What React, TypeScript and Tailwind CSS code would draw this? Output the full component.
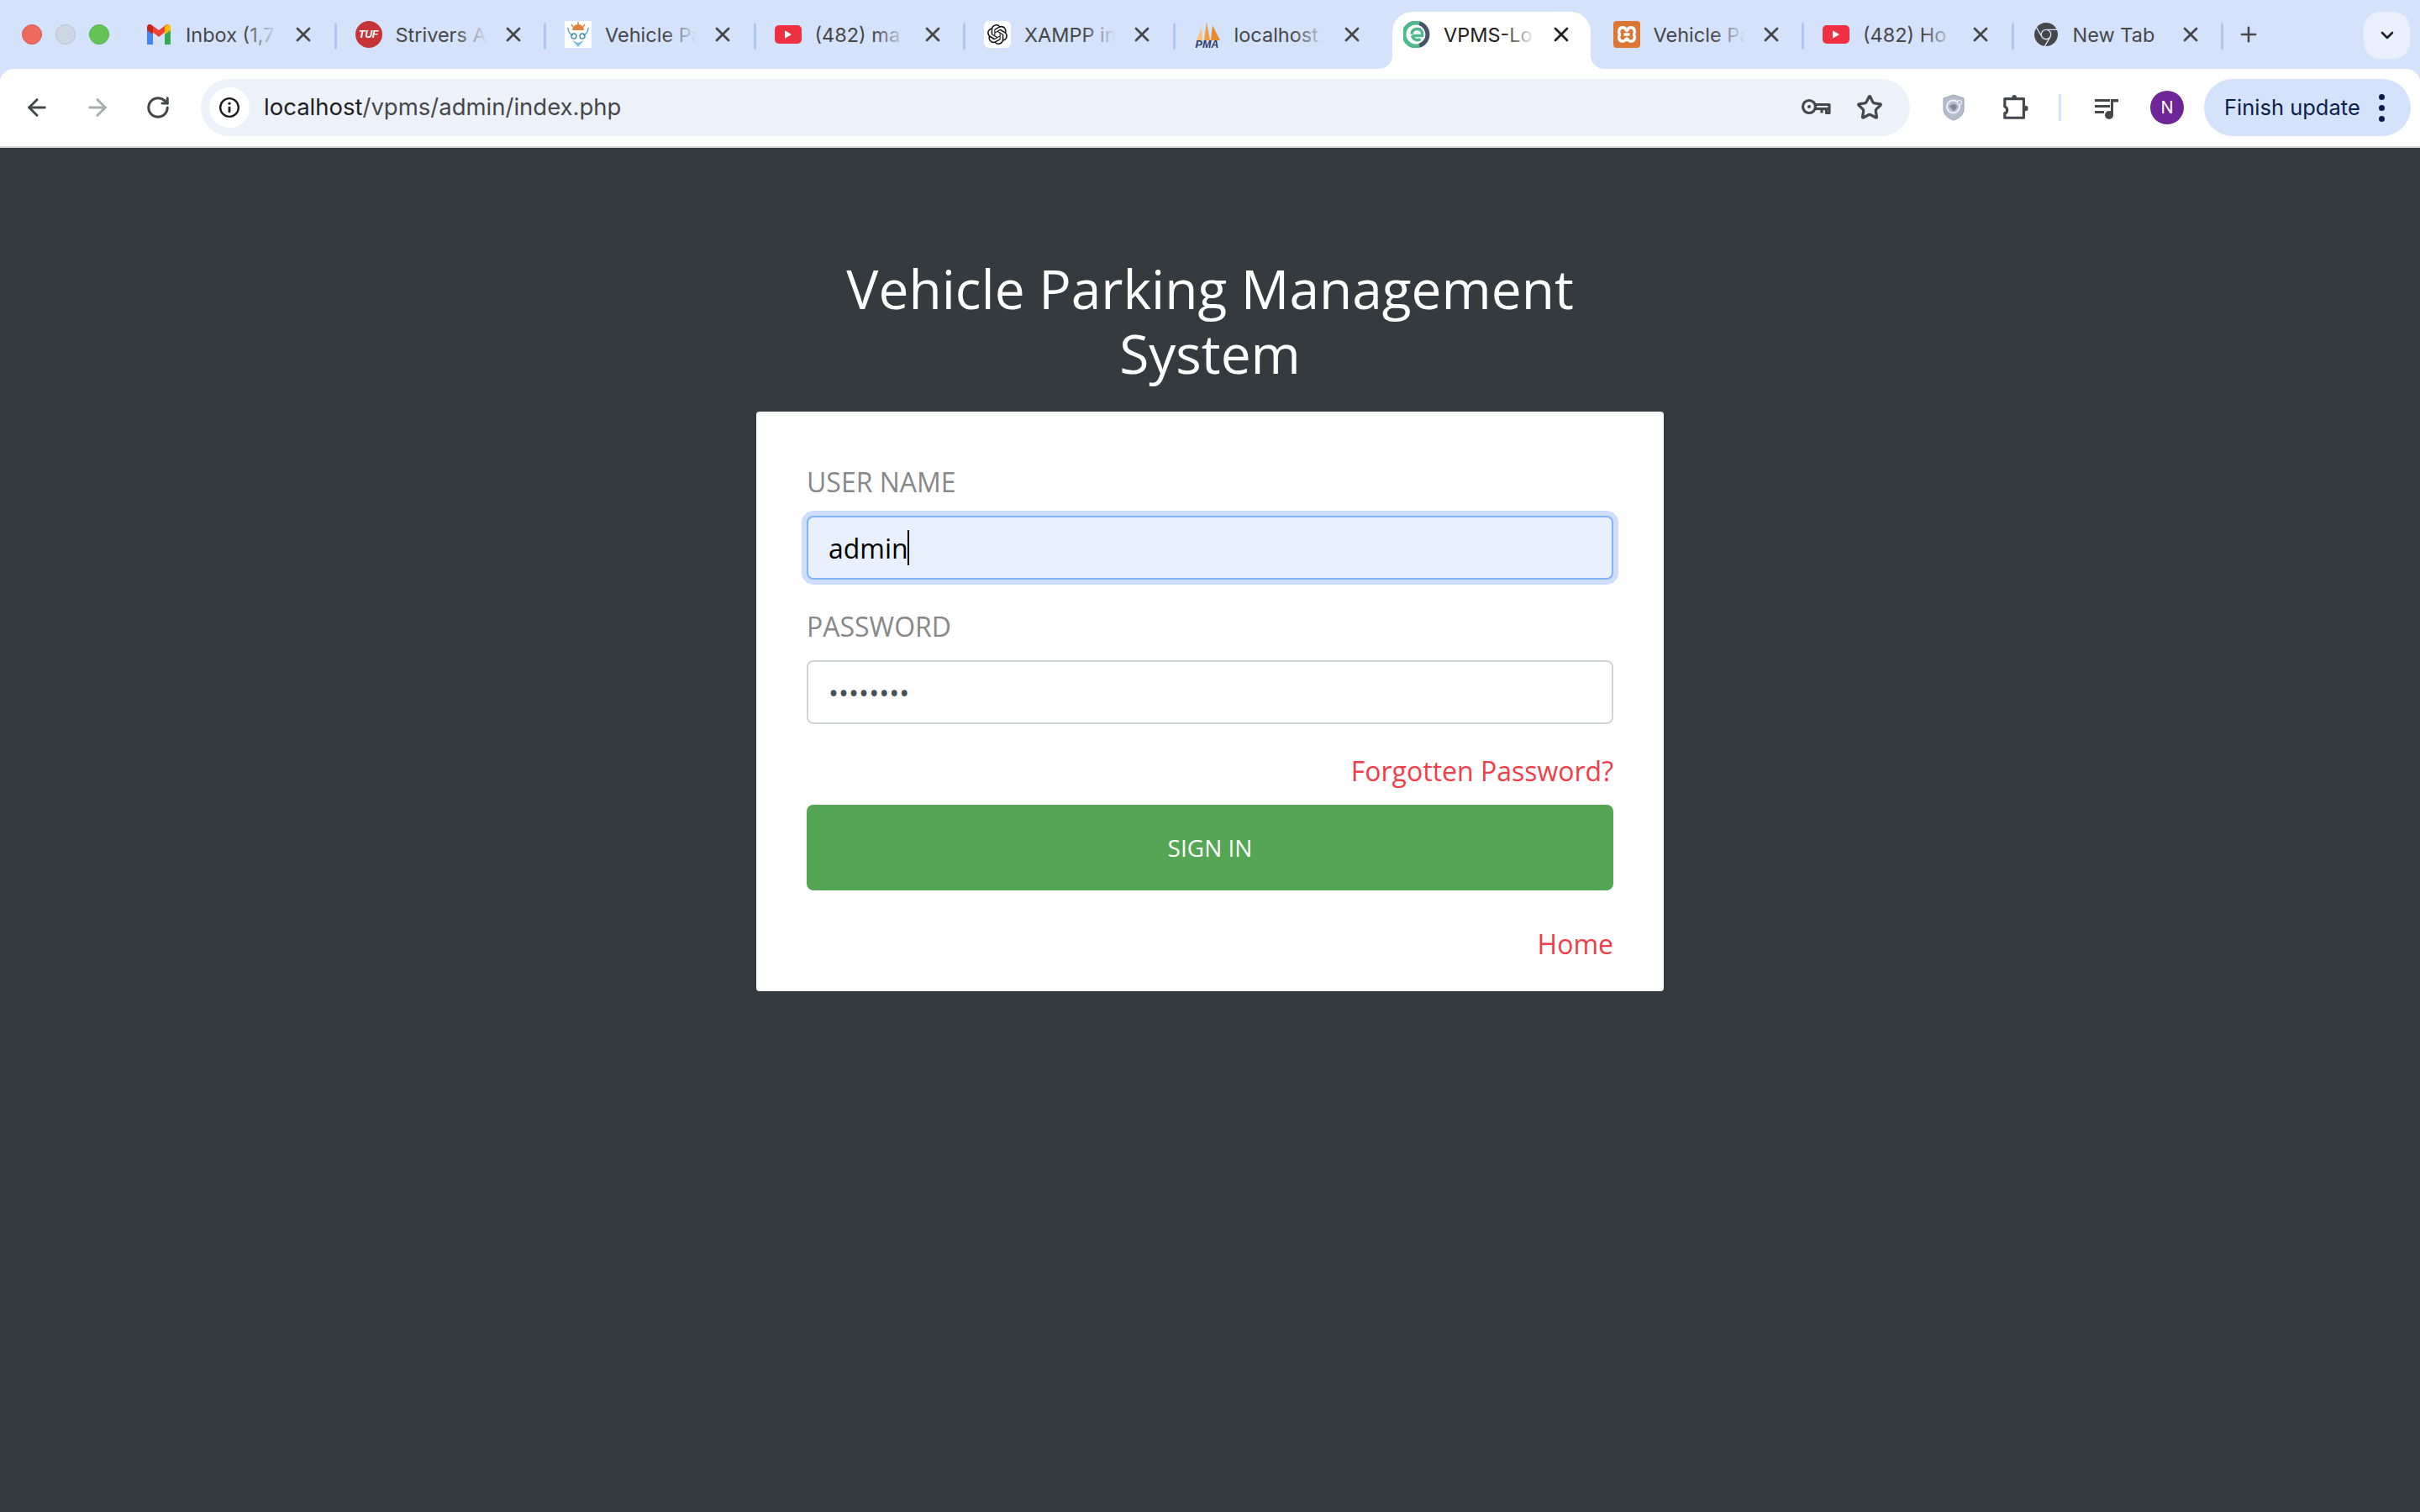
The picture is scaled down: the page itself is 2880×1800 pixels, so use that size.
import type { ReactNode } from 'react';
import { ArrowLeft, ArrowRight, RotateCw, X, Plus, ChevronDown, Star } from 'lucide-react';
import { SiOpenai, SiGooglechrome } from 'react-icons/si';

function GmailIcon() {
  return (
    <svg viewBox="2 4 28 24" className="w-[30px] h-[24px]">
      <path d="M2 28V8l7 5v15z" fill="#4285f4" />
      <path d="M23 28V13l7-5v20z" fill="#34a853" />
      <path d="M2 8c0-4 4-5 6-3l8 6 8-6c2-2 6-1 6 3l-14 11z" fill="#ea4335" />
      <path d="M23 7l2-2c2-2 5-1 5 3v3l-7 5z" fill="#fbbc04" />
      <path d="M2 8c0-4 3-5 5-3l2 2v9L2 11z" fill="#c5221f" />
    </svg>
  );
}

function TufIcon() {
  return (
    <div className="w-8 h-8 rounded-full bg-[#c63438] flex items-center justify-center">
      <span className="text-white text-[12.500px] font-extrabold italic tracking-tight font-['Liberation_Sans',sans-serif]">TUF</span>
    </div>
  );
}

function OwlIcon() {
  return (
    <svg viewBox="0 0 32 32" className="w-8 h-8">
      <rect width="32" height="32" fill="#ffffff" />
      <path d="M9 11a7 7 0 0 1 14 0z" fill="#e2803c" />
      <path d="M16 1v3M8 4l2 3M24 4l-2 3" stroke="#e2803c" strokeWidth="1.5" />
      <path d="M4 8c0 6 3 8 6 9M28 8c0 6-3 8-6 9" stroke="#5fa8c4" strokeWidth="1.5" fill="none" />
      <circle cx="11" cy="18" r="3" fill="none" stroke="#4b8fb0" strokeWidth="1.5" />
      <circle cx="21" cy="18" r="3" fill="none" stroke="#4b8fb0" strokeWidth="1.5" />
      <path d="M9 23l7 8 7-8-7 3z" fill="#7cc0d8" />
    </svg>
  );
}

function YoutubeIcon() {
  return (
    <div className="w-8 h-[22px] rounded-[5px] bg-[#ee3040] flex items-center justify-center">
      <svg viewBox="0 0 10 12" className="w-[8px] h-[10px]">
        <path d="M0 0l10 6-10 6z" fill="#ffffff" />
      </svg>
    </div>
  );
}

function OpenAiIcon() {
  return (
    <div className="w-8 h-8 rounded-[6px] bg-white flex items-center justify-center">
      <SiOpenai className="w-6 h-6 text-[#1a1a1a]" />
    </div>
  );
}

function PmaIcon() {
  return (
    <div className="relative w-8 h-8">
      <svg viewBox="0 0 32 24" className="w-8 h-[24px]">
        <path d="M3 23L9 8l1 15z" fill="#f5c27a" />
        <path d="M12 23l3-22 4 22z" fill="#ee9c3d" />
        <path d="M20 23l2-18 9 18z" fill="#e88a2c" />
      </svg>
      <span className="absolute left-0 bottom-[-2px] w-8 text-center text-[12.500px] leading-none font-bold italic text-[#2f3a6a] font-['Liberation_Sans',sans-serif]">PMA</span>
    </div>
  );
}

function EduIcon() {
  return (
    <svg viewBox="0 0 32 32" className="w-8 h-8">
      <path d="M19 2.600A14 14 0 1 0 19 29.400" fill="none" stroke="#4fb98d" strokeWidth="5" />
      <path d="M19 2.600A14 14 0 0 1 19 29.400" fill="none" stroke="#46546a" strokeWidth="5" />
      <path d="M10 15.500a6.500 6.500 0 0 1 12.500-2v4H10.500M10.500 17.500a6.500 6.500 0 0 0 10 4" fill="none" stroke="#4fb98d" strokeWidth="3.400" />
    </svg>
  );
}

function XamppIcon() {
  return (
    <div className="w-8 h-8 rounded-[4px] bg-[#dc7632] flex items-center justify-center">
      <svg viewBox="0 0 24 24" className="w-[28px] h-[28px]" fill="none" stroke="#ffffff" strokeWidth="3">
        <path d="M8 5c3 0 3 3 4 3s1-3 4-3c5 0 5 7 2 7 3 0 3 7-2 7-3 0-3-3-4-3s-1 3-4 3c-5 0-5-7-2-7-3 0-3-7 2-7z" />
        <path d="M9 12h6" />
      </svg>
    </div>
  );
}

function ChromeIcon() {
  return <SiGooglechrome className="w-7 h-7 text-[#45474a]" />;
}

type TabData = { title: string; icon: ReactNode; active?: boolean; noSep?: boolean; noFade?: boolean };

const tabs: TabData[] = [
  { title: 'Inbox (1,7', icon: <GmailIcon /> },
  { title: 'Strivers A', icon: <TufIcon /> },
  { title: 'Vehicle Pa', icon: <OwlIcon /> },
  { title: '(482) ma', icon: <YoutubeIcon /> },
  { title: 'XAMPP in', icon: <OpenAiIcon /> },
  { title: 'localhost', icon: <PmaIcon />, noSep: true },
  { title: 'VPMS-Lo', icon: <EduIcon />, active: true, noSep: true },
  { title: 'Vehicle Pa', icon: <XamppIcon /> },
  { title: '(482) Ho', icon: <YoutubeIcon /> },
  { title: 'New Tab', icon: <ChromeIcon />, noFade: true },
];

function Tab({ tab }: { tab: TabData }) {
  return (
    <div className="relative w-[249.5px] h-full shrink-0 flex items-center pl-[24px]">
      {tab.active && (
        <>
          <div className="absolute left-[11px] right-[3px] top-[14px] bottom-0 bg-white rounded-t-[24px]" />
          <svg viewBox="0 0 16 16" className="absolute left-[-5px] bottom-0 w-4 h-4">
            <path d="M16 0v16H0a16 16 0 0 0 16-16z" fill="#ffffff" />
          </svg>
          <svg viewBox="0 0 16 16" className="absolute right-[-13px] bottom-0 w-4 h-4">
            <path d="M0 0v16h16A16 16 0 0 1 0 0z" fill="#ffffff" />
          </svg>
        </>
      )}
      <div className="relative w-8 h-8 shrink-0 flex items-center justify-center">{tab.icon}</div>
      <div className={`relative ml-[16px] w-[116px] pt-[1px] overflow-hidden whitespace-nowrap text-[23.500px] leading-8 ${tab.active ? 'text-[#1f2023]' : 'text-[#45474a]'}`}>
        {tab.title}
        {!tab.noFade && (
          <div className={`absolute right-0 top-0 h-full w-[46px] bg-gradient-to-r from-transparent to-85% ${tab.active ? 'to-white' : 'to-[#d5e2fb]'}`} />
        )}
      </div>
      <X className={`relative ml-[10px] w-[28px] h-[28px] shrink-0 ${tab.active ? 'text-[#1f2023]' : 'text-[#45474a]'}`} strokeWidth={2.4} />
      {!tab.noSep && <div className="absolute right-[-2px] top-[27px] w-[3px] h-[32px] rounded-full bg-[#aec6f4]" />}
    </div>
  );
}

function TabStrip() {
  return (
    <div className="h-[82px] bg-[#d5e2fb] flex items-stretch shrink-0">
      {/* Window controls */}
      <div className="w-[149px] shrink-0 flex items-center gap-[16px] pl-[26px]">
        <div className="w-6 h-6 rounded-full bg-[#ee6a5f] border border-[#d9584e]" />
        <div className="w-6 h-6 rounded-full bg-[#ced5e3] border border-[#b9c0cf]" />
        <div className="w-6 h-6 rounded-full bg-[#62c554] border border-[#52ae46]" />
      </div>
      {tabs.map((tab, i) => (
        <Tab key={i} tab={tab} />
      ))}
      <div className="ml-[18px] flex items-center">
        <Plus className="w-[28px] h-[28px] text-[#45474a]" strokeWidth={2.2} />
      </div>
      <div className="ml-auto mr-[12px] mt-[14px] w-[55px] h-[56px] rounded-[20px] bg-[#e9effb] flex items-center justify-center">
        <ChevronDown className="w-[24px] h-[24px] text-[#1f2023]" strokeWidth={2.6} />
      </div>
    </div>
  );
}

function KeyIcon() {
  return (
    <svg viewBox="0 0 36 24" className="w-[36px] h-[24px]" fill="none" stroke="#45474a" strokeWidth="3.200">
      <circle cx="10" cy="11" r="7.500" />
      <circle cx="10" cy="11" r="2" fill="#45474a" stroke="none" />
      <path d="M17.500 8.500H34v10h-3.500v-4M25 14.500v4" strokeLinejoin="round" />
      <path d="M17.500 13.500H34" />
    </svg>
  );
}

function ShieldIcon() {
  return (
    <svg viewBox="0 0 26 32" className="w-[26px] h-[32px]">
      <path d="M13 1l12 4v13c0 7-6 11-12 13C7 29 1 25 1 18V5z" fill="#b4bccb" stroke="#9aa3b5" strokeWidth="1" />
      <circle cx="12.500" cy="15" r="7.500" fill="none" stroke="#eef0f4" strokeWidth="2" />
      <path d="M8 15c2-3 6-4 8-2s0 5-3 7z" fill="#7f899c" />
      <circle cx="20" cy="10" r="2.500" fill="#b4bccb" stroke="#eef0f4" strokeWidth="1.200" />
    </svg>
  );
}

function ExtensionIcon() {
  return (
    <svg viewBox="0 0 36 34" className="w-[34px] h-[32px]" fill="#45474a" stroke="#45474a" strokeLinejoin="round">
      <path d="M4 6h24v24H4v-6c4 0 4-7 0-8z" fill="none" strokeWidth="3.400" />
      <circle cx="16" cy="4" r="3" stroke="none" />
      <circle cx="30" cy="18" r="3.500" stroke="none" />
    </svg>
  );
}

function MediaIcon() {
  return (
    <svg viewBox="0 0 30 30" className="w-[30px] h-[30px]">
      <path d="M0 5h18v3H0zM0 12h18v3H0zM0 19h11v3H0z" fill="#45474a" />
      <path d="M19 5h9v3.500h-6V24h-3z" fill="#45474a" />
      <circle cx="17" cy="24" r="5" fill="#45474a" />
    </svg>
  );
}

function InfoIcon() {
  return (
    <svg viewBox="0 0 24 24" className="w-[26px] h-[26px]" fill="none" stroke="#1f2023" strokeWidth="2.200">
      <circle cx="12" cy="12" r="10" />
      <path d="M12 11v6.500" strokeWidth="2.600" />
      <circle cx="12" cy="7.500" r="1.500" fill="#1f2023" stroke="none" />
    </svg>
  );
}

function Toolbar() {
  return (
    <div className="bg-[#d5e2fb] shrink-0">
      <div className="h-[94px] bg-white rounded-t-[16px] border-b-2 border-[#dcdcdc] flex items-center font-['Inter',sans-serif]">
        <ArrowLeft className="ml-[28px] w-[32px] h-[32px] text-[#45474a]" strokeWidth={2.2} />
        <ArrowRight className="ml-[40px] w-[32px] h-[32px] text-[#a9abae]" strokeWidth={2.2} />
        <RotateCw className="ml-[41px] w-[30px] h-[30px] text-[#45474a]" strokeWidth={2.4} />

        {/* Omnibox */}
        <div className="ml-[36px] w-[2034px] h-[68px] rounded-full bg-[#edf2fa] flex items-center pl-[10px] pr-[32px]">
          <div className="w-[48px] h-[48px] rounded-full bg-white flex items-center justify-center">
            <InfoIcon />
          </div>
          <div className="ml-[17px] text-[27.500px] text-[#45474a] whitespace-nowrap">
            <span className="text-[#1f2023]">localhost</span>/vpms/admin/index.php
          </div>
          <div className="ml-auto flex items-center gap-[30px]">
            <KeyIcon />
            <Star className="w-[32px] h-[32px] text-[#45474a]" strokeWidth={2.4} />
          </div>
        </div>

        <div className="ml-[39px]"><ShieldIcon /></div>
        <div className="ml-[44px]"><ExtensionIcon /></div>
        <div className="ml-[34px] w-[3px] h-[32px] rounded-full bg-[#d5e2fb]" />
        <div className="ml-[40px]"><MediaIcon /></div>
        <div className="ml-[36px] w-[40px] h-[40px] rounded-full bg-[#6f2597] flex items-center justify-center text-white text-[20px]">N</div>
        <div className="ml-[24px] w-[246px] h-[68px] rounded-full bg-[#d5e2fb] flex items-center pl-[24px]">
          <span className="text-[25.500px] text-[#0b1d4a] whitespace-nowrap">Finish update</span>
          <div className="ml-[22px] flex flex-col gap-[6px]">
            <div className="w-[7px] h-[7px] rounded-full bg-[#0b1d4a]" />
            <div className="w-[7px] h-[7px] rounded-full bg-[#0b1d4a]" />
            <div className="w-[7px] h-[7px] rounded-full bg-[#0b1d4a]" />
          </div>
        </div>
      </div>
    </div>
  );
}

function LoginCard() {
  return (
    <div className="w-[1080px] h-[690px] mt-[31px] bg-white rounded-[4px] px-[60px] pt-[60px]">
      <label className="block text-[32px] leading-[48px] text-[#888888] mb-[16px]">USER NAME</label>
      <div className="relative">
        <input
          readOnly
          defaultValue="admin"
          className="block w-full h-[76px] px-[24px] text-[32px] text-black bg-[#e8effd] border-2 border-[#80b3f8] rounded-[8px] outline-none shadow-[0_0_0_6px_#cfdefb] font-['Open_Sans',sans-serif]"
        />
        <div className="absolute left-[120px] top-[17px] w-[2px] h-[42px] bg-black" />
      </div>

      <label className="block mt-[32px] text-[32px] leading-[48px] text-[#888888] mb-[16px]">PASSWORD</label>
      <input
        readOnly
        type="password"
        defaultValue="password"
        className="block w-full h-[76px] px-[24px] text-[32px] text-[#495057] bg-white border-2 border-[#ced4da] rounded-[8px] outline-none font-['Open_Sans',sans-serif]"
      />

      <div className="mt-[32px] text-right text-[32px] leading-[48px] text-[#ef3e4a]">
        <a>Forgotten Password?</a>
      </div>

      <button className="block w-full h-[102px] mt-[16px] rounded-[8px] bg-[#54a654] text-white text-[28px]">
        SIGN IN
      </button>

      <div className="mt-[40px] text-right text-[32px] leading-[48px] text-[#ef3e4a]">
        <a>Home</a>
      </div>
    </div>
  );
}

export default function App() {
  return (
    <div className="h-screen flex flex-col bg-[#353a3e] overflow-hidden font-['Inter',sans-serif]">
      <TabStrip />
      <Toolbar />

      <div className="flex-1 flex flex-col items-center pt-[129px] font-['Open_Sans',sans-serif]">
        <h1 className="w-[1080px] text-center text-[64px] leading-[77px] text-white">
          Vehicle Parking Management System
        </h1>
        <LoginCard />
      </div>
    </div>
  );
}
